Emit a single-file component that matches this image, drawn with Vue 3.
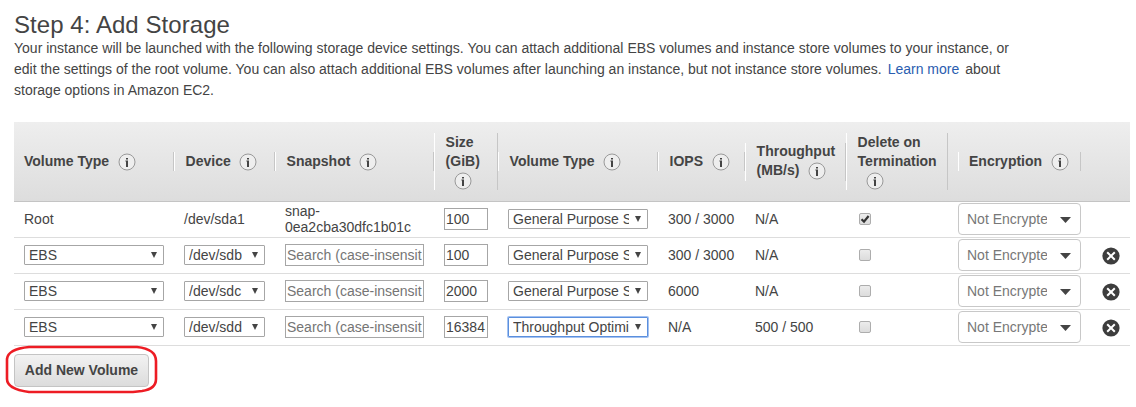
<script setup>
const headers = [
  { lines: ['Volume Type'], inline: true, first: true },
  { lines: ['Device'], inline: true },
  { lines: ['Snapshot'], inline: true },
  { lines: ['Size', '(GiB)'], inline: false },
  { lines: ['Volume Type'], inline: true },
  { lines: ['IOPS'], inline: true },
  { lines: ['Throughput', '(MB/s)'], inline: true },
  { lines: ['Delete on', 'Termination'], inline: false },
  { lines: ['Encryption'], inline: true, gap: true },
]

const rows = [
  { root: true, device: '/dev/sda1', size: '100', type: 'General Purpose S', iops: '300 / 3000', rate: 'N/A', checked: true },
  { device: '/dev/sdb', size: '100', type: 'General Purpose S', iops: '300 / 3000', rate: 'N/A' },
  { device: '/dev/sdc', size: '2000', type: 'General Purpose S', iops: '6000', rate: 'N/A' },
  { device: '/dev/sdd', size: '16384', type: 'Throughput Optimi', iops: 'N/A', rate: '500 / 500', focused: true },
]
</script>

<template>
  <main class="page">
    <h1>Step 4: Add Storage</h1>
    <p class="intro">
      <span class="l1">Your instance will be launched with the following storage device settings. You can attach additional EBS volumes and instance store volumes to your instance, or</span><br>
      <span>edit the settings of the root volume. You can also attach additional EBS volumes after launching an instance, but not instance store volumes. <a class="link">Learn more</a> about</span><br>
      <span class="l3">storage options in Amazon EC2.</span>
    </p>

    <section class="table">
      <div class="grid head">
        <div v-for="(h, i) in headers" :key="i" class="th" :class="{ first: h.first, gap: h.gap }">
          <div class="th-inner">
            <div v-for="(line, j) in h.lines" :key="j" class="th-line">
              <span>{{ line }}</span>
              <svg v-if="h.inline && j === h.lines.length - 1" class="info" viewBox="0 0 18 18">
                <circle cx="9" cy="9" r="8" />
                <path d="M8 5h2v1.6H8zM7.4 7.5H10V14H8V8.5h-.6z" />
              </svg>
            </div>
            <div v-if="!h.inline" class="th-line">
              <svg class="info own" viewBox="0 0 18 18">
                <circle cx="9" cy="9" r="8" />
                <path d="M8 5h2v1.6H8zM7.4 7.5H10V14H8V8.5h-.6z" />
              </svg>
            </div>
          </div>
        </div>
      </div>

      <div v-for="row in rows" :key="row.device" class="grid row">
        <div class="td">
          <span v-if="row.root">Root</span>
          <div v-else class="select wide"><span class="clip">EBS</span><i class="tri"></i></div>
        </div>
        <div class="td">
          <span v-if="row.root">{{ row.device }}</span>
          <div v-else class="select dev"><span class="clip">{{ row.device }}</span><i class="tri"></i></div>
        </div>
        <div class="td">
          <span v-if="row.root" class="snap">snap-<br>0ea2cba30dfc1b01c</span>
          <div v-else class="input search"><span class="clip">Search (case-insensit</span></div>
        </div>
        <div class="td"><div class="input size"><span class="clip">{{ row.size }}</span></div></div>
        <div class="td">
          <div class="select wide" :class="{ focused: row.focused }"><span class="clip">{{ row.type }}</span><i class="tri"></i></div>
        </div>
        <div class="td">{{ row.iops }}</div>
        <div class="td">{{ row.rate }}</div>
        <div class="td check-cell">
          <span class="check">
            <svg v-if="row.checked" viewBox="0 0 10 10"><path d="M1.5 5.2L4 7.6L8.6 2" /></svg>
          </span>
        </div>
        <div class="td enc-cell">
          <div class="enc"><span class="clip">Not Encrypte</span><i class="caret"></i></div>
        </div>
        <div class="td del-cell">
          <svg v-if="!row.root" class="remove" viewBox="0 0 18 18">
            <circle cx="9" cy="9" r="8.6" />
            <path d="M5.2 5.2l7.6 7.6M12.8 5.2l-7.6 7.6" />
          </svg>
        </div>
      </div>
    </section>

    <div class="actions">
      <button class="add">Add New Volume</button>
      <svg class="mark" viewBox="0 0 153 49">
        <path d="M24 2H132Q151 4 151 16V34Q151 44 137 46L128 47H24Q2 44 2 34V14Q3 4 24 2Z" />
      </svg>
    </div>
  </main>
</template>

<style>
body { background: #fff; }
</style>

<style scoped>
.page {
  box-sizing: border-box;
  width: 1136px;
  height: 407px;
  padding: 10px 6px 0 14px;
  overflow: hidden;
  font: 14px/16px "Liberation Sans", Arial, sans-serif;
  color: #444;
}
h1 { margin: 0; height: 28px; font-size: 24px; line-height: 30px; font-weight: 400; letter-spacing: 0.06px; }
.intro { margin: 0; height: 84px; line-height: 21px; white-space: nowrap; }
.l1 { letter-spacing: 0.006px; }
.link { color: #2a5db0; margin-right: 2px; margin-left: 2px; }
.grid {
  display: grid;
  grid-template-columns: 160px 101px 159px 64px 160px 87px 101px 102px 133px 49px;
}
.head {
  box-sizing: border-box;
  height: 80px;
  align-items: center;
  background: linear-gradient(#eee, #ddd);
  border-bottom: 1px solid #c4c4c4;
}
.th-inner {
  padding-left: 10.6px;
  border-left: 1px solid #fff;
  border-right: 1px solid #c6c6c6;
  font-weight: 700;
  white-space: nowrap;
}
.first .th-inner { border-left: 0; padding-left: 10px; }
.gap { padding-left: 10px; }
.gap .th-inner { padding-left: 10px; }
.th-line { display: flex; align-items: center; height: 19px; }
.th-line span { margin-top: -2px; }
.info { flex: none; width: 18px; height: 18px; margin-left: 8.5px; }
.info.own { margin-left: 8px; }
.info circle { fill: #eee; stroke: #999; stroke-width: 1; }
.info path { fill: #444; }
.row { height: 36px; box-sizing: border-box; border-bottom: 1px solid #ddd; }
.td { display: flex; align-items: center; height: 34px; padding-left: 10px; white-space: nowrap; }
.snap { line-height: 16px; }
.clip { flex: 1; min-width: 0; overflow: hidden; white-space: nowrap; }
.select {
  box-sizing: border-box;
  display: flex;
  align-items: center;
  height: 20px;
  padding: 0 6px 0 4px;
  border: 1px solid #a6a6a6;
  border-radius: 1px;
  background: #fff;
}
.wide { width: 140px; }
.dev { width: 81px; }
.tri {
  width: 6px;
  height: 6px;
  margin-left: 6px;
  background: #444;
  clip-path: polygon(0 0, 100% 0, 50% 100%);
}
.focused { border-color: #5b8fdd; box-shadow: 0 0 0 1px #a3c2f2; }
.input {
  box-sizing: border-box;
  display: flex;
  align-items: center;
  height: 22px;
  padding: 0 1px;
  border: 1px solid #a6a6a6;
}
.search { width: 139px; color: #757575; }
.size { width: 44px; }
.check-cell { padding-left: 13px; }
.check {
  box-sizing: border-box;
  width: 12px;
  height: 12px;
  border: 1px solid #adadad;
  border-radius: 2px;
  background: linear-gradient(#ececec, #dcdcdc);
}
.check svg { display: block; width: 10px; height: 10px; }
.check path { fill: none; stroke: #333; stroke-width: 2.2; }
.enc {
  box-sizing: border-box;
  display: flex;
  align-items: center;
  width: 123px;
  height: 32px;
  padding: 0 9px 0 8px;
  border: 1px solid #c8c8c8;
  border-radius: 4px;
  color: #777;
}
.caret {
  width: 11px;
  height: 6px;
  margin: 2px 0 0 13px;
  background: #444;
  clip-path: polygon(0 0, 100% 0, 50% 100%);
}
.del-cell { padding-left: 20.6px; }
.remove { width: 18px; height: 18px; margin-top: 2px; }
.remove circle { fill: #3d3d3d; }
.remove path { stroke: #fff; stroke-width: 2; }
.actions { position: relative; padding-top: 8px; }
.add {
  display: block;
  box-sizing: border-box;
  width: 135px;
  height: 33px;
  padding: 0 0 2px;
  border: 1px solid #c4c4c4;
  border-radius: 4px;
  background: linear-gradient(#f2f2f2, #dcdcdc);
  font: 700 14px/16px "Liberation Sans", Arial, sans-serif;
  color: #444;
}
.mark { position: absolute; left: -9px; top: -1px; width: 153px; height: 49px; }
.mark path { fill: none; stroke: #ed1c24; stroke-width: 2.6; }
</style>
